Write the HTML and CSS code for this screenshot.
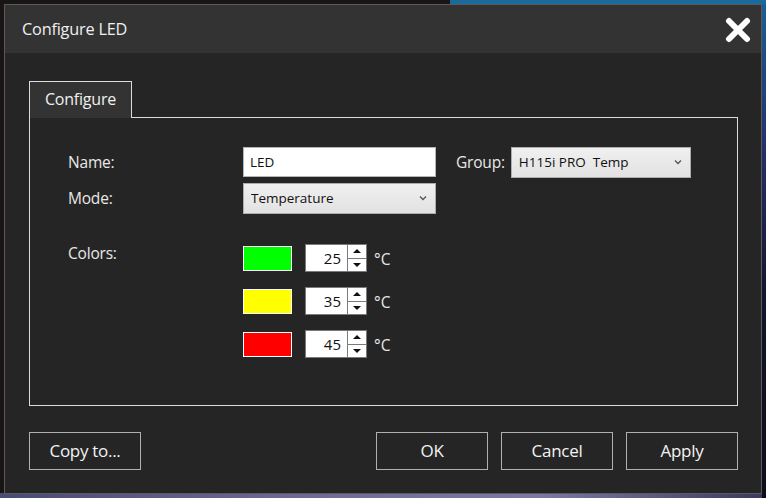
FILE: index.html
```html
<!DOCTYPE html>
<html>
<head>
<meta charset="utf-8">
<link rel="stylesheet" href="styles.css">
</head>
<body>
<div class="dialog">
  <div class="titlebar">
    <span class="title">Configure LED</span>
    <svg class="close" width="26" height="26" viewBox="0 0 26 26"><path d="M4 4 L22 22 M22 4 L4 22" stroke="#fff" stroke-width="6" stroke-linecap="round"/></svg>
  </div>
  <div class="content">
    <div class="tabs"><div class="tab">Configure</div></div>
    <div class="panel">
      <div class="form">
        <div class="label">Name:</div>
        <div class="textbox">LED</div>
        <div class="group">
          <span class="label">Group:</span>
          <div class="select wide">H115i PRO&nbsp; Temp<svg class="chev" width="8" height="6" viewBox="0 0 8 6"><path d="M1 1.5 L4 4.5 L7 1.5" fill="none" stroke="#555" stroke-width="1.3"/></svg></div>
        </div>
        <div class="label">Mode:</div>
        <div class="select">Temperature<svg class="chev" width="8" height="6" viewBox="0 0 8 6"><path d="M1 1.5 L4 4.5 L7 1.5" fill="none" stroke="#555" stroke-width="1.3"/></svg></div>
        <div></div>
        <div class="label colors-label">Colors:</div>
        <div class="colors">
          <div class="crow">
            <div class="swatch" style="background:#00ff00"></div>
            <div class="spin"><div class="num">25</div><div class="btns"><div class="up"></div><div class="down"></div></div></div>
            <span class="unit">°C</span>
          </div>
          <div class="crow">
            <div class="swatch" style="background:#ffff00"></div>
            <div class="spin"><div class="num">35</div><div class="btns"><div class="up"></div><div class="down"></div></div></div>
            <span class="unit">°C</span>
          </div>
          <div class="crow">
            <div class="swatch" style="background:#ff0000"></div>
            <div class="spin"><div class="num">45</div><div class="btns"><div class="up"></div><div class="down"></div></div></div>
            <span class="unit">°C</span>
          </div>
        </div>
      </div>
    </div>
    <div class="footer">
      <button class="btn">Copy to...</button>
      <div class="right">
        <button class="btn">OK</button>
        <button class="btn">Cancel</button>
        <button class="btn">Apply</button>
      </div>
    </div>
  </div>
</div>
</body>
</html>
```

FILE: styles.css
```css
html, body { margin: 0; height: 100%; }
body {
  width: 766px; height: 498px; box-sizing: border-box;
  padding: 4px 4px 4px 4px;
  overflow: hidden;
  font-family: "Open Sans", "Noto Sans", sans-serif;
  background:
    linear-gradient(to right, transparent 0 450px, #1b6a9c 450px) top / 100% 4px no-repeat,
    linear-gradient(to bottom, #1b5f95 0, #25306a 30%, #14142a 60%, #0d0d1a 100%) right / 4px 100% no-repeat,
    linear-gradient(to right, #4a4a78, #6d6a98 40%, #7a7aa5 70%, #3a3a60) bottom / 100% 5px no-repeat,
    #1a1515;
}
.dialog {
  height: 100%;
  box-sizing: border-box;
  border: 1px solid #5a5a5a;
  background: #252525;
  display: flex; flex-direction: column;
}
.titlebar {
  height: 48px; background: #333333;
  display: flex; align-items: center; justify-content: space-between;
  padding: 0 10px 0 17px;
}
.title { color: #f0f0f0; font-size: 16.3px; letter-spacing: -0.2px; }
.close { margin-top: 1px; }
.content { flex: 1; padding: 27px 23px 0 24px; display: flex; flex-direction: column; }
.tabs { display: flex; height: 37px; }
.tab {
  width: 103px; box-sizing: border-box;
  border: 1px solid #dcdcdc; border-bottom: none;
  background: #333333; color: #f0f0f0;
  font-size: 16px; letter-spacing: -0.2px;
  display: flex; align-items: center; justify-content: center;
  padding-bottom: 2px;
  position: relative; top: 1px; z-index: 1;
}
.panel {
  height: 289px; box-sizing: border-box;
  border: 1px solid #dcdcdc;
  padding: 29px 0 0 38px;
}
.form {
  display: grid;
  grid-template-columns: 175px 193px auto;
  grid-template-rows: 30px 30px auto;
  row-gap: 6px;
  align-items: center;
}
.label { color: #e8e8e8; font-size: 15.5px; letter-spacing: -0.2px; }
.textbox {
  height: 30px; box-sizing: border-box;
  background: #fff; border: 1px solid #b5b5b5;
  font-size: 13.5px; color: #111;
  padding: 5px 6px 0;
}
.select {
  height: 31px; box-sizing: border-box;
  background: linear-gradient(#f0f0f0, #e2e2e2);
  border: 1px solid #adadad;
  font-size: 13.5px; color: #111;
  display: flex; align-items: center; justify-content: space-between;
  padding: 0 8px 1px 7px;
}
.select.wide { width: 180px; }
.group { display: flex; align-items: center; gap: 6px; padding-left: 20px; }
.colors-label { align-self: start; margin-top: 23px; }
.colors { display: flex; flex-direction: column; gap: 15px; margin-top: 25px; }
.crow { display: flex; align-items: center; height: 28px; }
.swatch { width: 49px; height: 25px; box-sizing: border-box; border: 1px solid #fff; }
.spin {
  margin-left: 13px; width: 62px; height: 28px; box-sizing: border-box;
  border: 1px solid #7a7a7a; background: #fff; display: flex;
}
.num { flex: 1; text-align: right; font-size: 15px; color: #111; padding: 3px 6px 0 0; }
.btns { width: 18px; border-left: 1px solid #7a7a7a; display: flex; flex-direction: column; }
.btns > div { flex: 1; display: flex; align-items: center; justify-content: center; }
.btns .up { border-bottom: 1px solid #7a7a7a; }
.btns .up::after { content: ""; border: 4px solid transparent; border-bottom: 4px solid #111; border-top: none; }
.btns .down::after { content: ""; border: 4px solid transparent; border-top: 4px solid #111; border-bottom: none; }
.unit { color: #e8e8e8; font-size: 15.5px; margin-left: 7px; margin-top: 1px; }
.footer {
  display: flex; justify-content: space-between;
  margin-top: 26px;
}
.right { display: flex; gap: 13px; }
.btn {
  width: 112px; height: 38px; box-sizing: border-box;
  background: #252525; border: 1px solid #b0b0b0;
  color: #f2f2f2; font-family: inherit; font-size: 17px; letter-spacing: -0.3px;
  padding: 0 0 2px;
}
```
